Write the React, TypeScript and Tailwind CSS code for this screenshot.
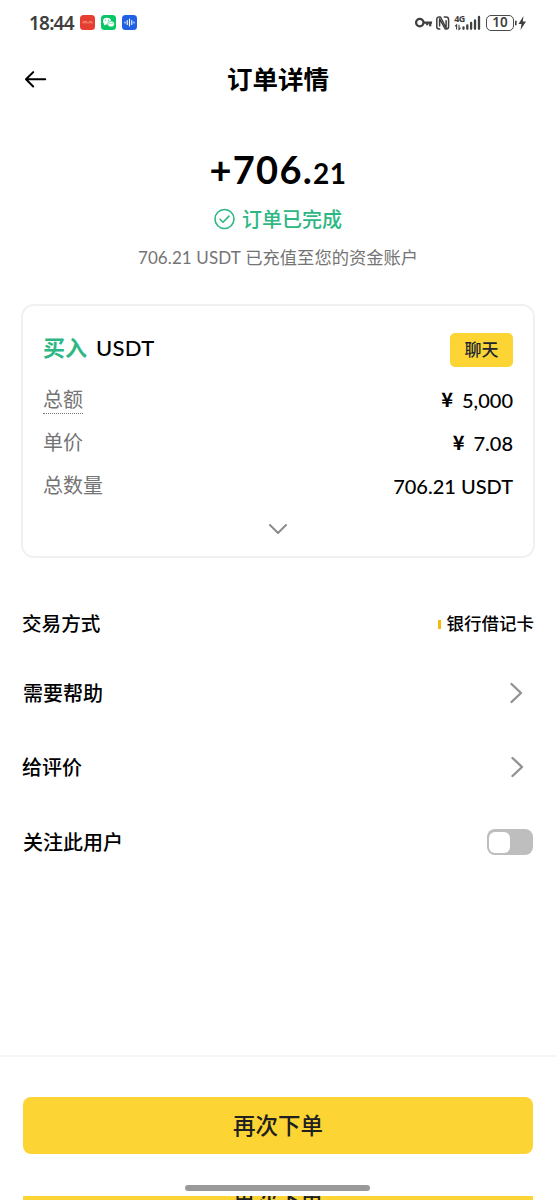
import React from "react";

const cn = "font-['Lato','Noto_Sans_CJK_SC',sans-serif]";

function Chevron() {
  return (
    <svg width="14" height="22" viewBox="0 0 14 22" fill="none" stroke="#929292" strokeWidth="2.4" strokeLinecap="round" strokeLinejoin="round">
      <path d="M2.5 2l9.5 9L2.5 20" />
    </svg>
  );
}

function StatusBar() {
  return (
    <header className="flex h-[46px] items-center pl-[29px] pr-[29px] text-[#3f3f3f]">
      <span className="w-[47px] whitespace-nowrap font-['Noto_Sans',sans-serif] text-[19px] font-semibold leading-none tracking-[-0.8px]">18:44</span>
      <svg className="ml-1" width="58" height="16" viewBox="0 0 58 16">
        <rect x="0" y="0" width="15" height="15" rx="3.5" fill="#e63f31" />
        <path d="M2 7.8h11M3 6.5h4m2 0h3" stroke="#f58a70" strokeWidth="0.9" />
        <rect x="21" y="0" width="15" height="15" rx="3.5" fill="#08c665" />
        <ellipse cx="27" cy="6.2" rx="4" ry="3.4" fill="#fff" />
        <path d="M24.4 8.5l-.5 2 2.2-1z" fill="#fff" />
        <ellipse cx="31" cy="9" rx="3.4" ry="2.9" fill="#fff" stroke="#08c665" strokeWidth="0.6" />
        <path d="M25.6 5.3h.1m2.7 0h.1m1.4 3h.1m2 0h.1" stroke="#08c665" strokeWidth="1" strokeLinecap="round" />
        <rect x="42" y="0" width="15" height="15" rx="3.5" fill="#2160e5" />
        <path d="M45 7v1M47.2 5.5v4M49.5 4v7M51.8 5.5v4M54 7v1" stroke="#fff" strokeWidth="1.1" strokeLinecap="round" />
      </svg>
      <div className="ml-auto flex items-center">
        <svg width="66" height="18" viewBox="0 0 66 18" fill="none" stroke="#3f3f3f">
          <circle cx="4.8" cy="8.6" r="3.7" strokeWidth="2.3" />
          <path d="M8.5 8.6h8.5M15.2 8.6v3.6M12.2 8.6v2.6" strokeWidth="2.2" />
          <path d="M25.3 15H24a2.2 2.2 0 0 1-2.2-2.2V5.2A2.2 2.2 0 0 1 24 3h1.5l5.6 11V6.2" strokeWidth="1.5" strokeLinejoin="round" />
          <path d="M28.7 3H31a2.6 2.6 0 0 1 2.6 2.6v7.2A2.2 2.2 0 0 1 31.4 15h-1.2L24.6 4.8v7.6" strokeWidth="1.5" strokeLinejoin="round" />
          <text x="39.3" y="8.4" fill="#3f3f3f" stroke="none" fontSize="9" fontWeight="700" fontFamily="Noto Sans, sans-serif" textLength="11">4G</text>
          <path d="M41.6 15.5v-4.7l-1.5 1.5M44 10.8v4.7l1.5-1.5" strokeWidth="1.1" />
          <path d="M48.5 14.8v-1.3M52.3 14.8V11.5M56.1 14.8V9M60 14.8V6.5M64 14.8V3" strokeWidth="2.3" strokeLinecap="round" />
        </svg>
        <div className="ml-[5px] flex h-[16px] w-[28px] items-center justify-center rounded-[5px] border-[1.5px] border-[#4b4b4b] font-['Noto_Sans',sans-serif] text-[13.5px] font-semibold leading-none">10</div>
        <svg width="13" height="16" viewBox="0 0 13 16" fill="#3f3f3f">
          <rect x="1" y="5.5" width="1.6" height="5" rx="0.8" />
          <path d="M9.5 1L4.5 9h3l-1 6 5.5-8.5H8.8z" />
        </svg>
      </div>
    </header>
  );
}

const details = [
  { label: "总额", yen: true, value: "5,000", dotted: true },
  { label: "单价", yen: true, value: "7.08", dotted: false },
  { label: "总数量", yen: false, value: "706.21 USDT", dotted: false },
];

export default function App() {
  return (
    <main className={`${cn} flex h-[1200px] w-[556px] flex-col overflow-hidden bg-white text-black`}>
      <StatusBar />

      <nav className="grid h-[66px] grid-cols-[60px_1fr_60px] items-center">
        <svg className="ml-[24px]" width="24" height="20" viewBox="0 0 24 20" fill="none" stroke="#000" strokeWidth="2" strokeLinecap="round" strokeLinejoin="round">
          <path d="M21.2 10.3H2.3M9.2 3.1L2 10.3l7.2 7.2" />
        </svg>
        <h1 className="pt-[2px] text-center text-[25.5px] font-bold leading-none">订单详情</h1>
      </nav>

      <section className="flex flex-col items-center pt-[35px]">
        <div className="flex h-[44px] items-baseline font-bold leading-[44px]">
          <span className="text-[38px] tracking-[1.3px]">+706.</span>
          <span className="text-[28px] tracking-[0.5px]">21</span>
        </div>
        <div className="mt-[14px] flex h-[28px] items-center gap-[6px] text-[#2db783]">
          <svg width="22" height="22" viewBox="0 0 22 22" fill="none" stroke="currentColor" strokeWidth="1.6" strokeLinecap="round" strokeLinejoin="round">
            <circle cx="10.5" cy="11" r="9.5" />
            <path d="M6 11.3l3 3 6-6.2" />
          </svg>
          <span className="text-[20px] font-medium leading-[28px]">订单已完成</span>
        </div>
        <p className="mt-[13px] h-[24px] whitespace-nowrap text-[17.3px] leading-[24px] text-[#747474]">
          <span className="text-[17px] tracking-[0.1px]">706.21 USDT</span> 已充值至您的资金账户
        </p>
      </section>

      <section className="mx-[21px] mt-[34px] flex h-[254px] flex-col rounded-[13px] border-2 border-[#f0f0f0] pl-[20px] pr-[20px] pt-[26px]">
        <div className="flex h-[36px] items-center justify-between">
          <h2 className="flex items-baseline gap-[9px] pb-[5px] text-[22px] leading-[31px]">
            <span className="font-bold text-[#2db783]">买入</span>
            <span className="font-medium tracking-[0.3px]">USDT</span>
          </h2>
          <button className="h-[34px] w-[63px] rounded-[5px] bg-[#fcd535] text-[17px] font-medium leading-[34px] text-[#202630]">聊天</button>
        </div>
        <dl className="mt-[9px]">
          {details.map((d) => (
            <div key={d.label} className="flex h-[43px] items-center justify-between">
              <dt className="relative pt-px text-[20px] leading-[30px] text-[#747474]">
                {d.label}
                {d.dotted && <span className="absolute inset-x-0 bottom-0 border-b border-dotted border-[#777]" />}
              </dt>
              <dd className="flex items-center gap-[9px] pt-[3px] text-[20px] font-medium leading-[30px]">
                {d.yen && <span className="pb-[2px] font-['Noto_Sans_CJK_SC',sans-serif] text-[20px] font-bold">¥</span>}
                <span>{d.value}</span>
              </dd>
            </div>
          ))}
        </dl>
        <svg className="mx-auto mt-[17px]" width="20" height="12" viewBox="0 0 20 12" fill="none" stroke="#8b8b8b" strokeWidth="2" strokeLinecap="round" strokeLinejoin="round">
          <path d="M2 2l8 8 8-8" />
        </svg>
      </section>

      <section className="flex flex-col pl-[22px] pr-[22px] pt-[43px] text-[20px] font-medium">
        <div className="flex h-[46px] items-center justify-between">
          <span className="text-[19.6px]">交易方式</span>
          <span className="flex items-center gap-[6px] text-[17.5px]">
            <i className="h-[9px] w-[3px] bg-[#f7ba0b]" />
            银行借记卡
          </span>
        </div>
        <div className="mt-[17px] flex h-[58px] items-center justify-between pl-px pr-[11px]">
          <span>需要帮助</span>
          <Chevron />
        </div>
        <div className="mt-[15px] flex h-[60px] items-center justify-between pr-[10px]">
          <span>给评价</span>
          <Chevron />
        </div>
        <div className="mt-[15px] flex h-[60px] items-center justify-between pl-px pr-px">
          <span>关注此用户</span>
          <span className="flex h-[26px] w-[46px] items-center rounded-[8px] bg-[#bebebe] pl-[2px]">
            <i className="h-[21px] w-[21px] rounded-[6px] bg-white" />
          </span>
        </div>
      </section>

      <footer className="mt-auto flex h-[145px] shrink-0 flex-col border-t-2 border-[#f5f5f5]">
        <button className="mx-[23px] mt-[40px] h-[57px] shrink-0 rounded-[8px] bg-[#fcd535] pb-px text-[22.5px] font-medium leading-[55px] text-[#202020]">再次下单</button>
        <span className="ml-[185px] mt-[31px] h-[6px] w-[185px] shrink-0 rounded-full bg-[#999]" />
        <div className="mx-[23px] mt-[5px] flex h-[4px] shrink-0 justify-center overflow-hidden bg-[#fcd535]">
          <span className="-mt-[7px] h-[22px] text-[22.5px] font-medium leading-[22px] text-[#202020]">再次下单</span>
        </div>
      </footer>
    </main>
  );
}
